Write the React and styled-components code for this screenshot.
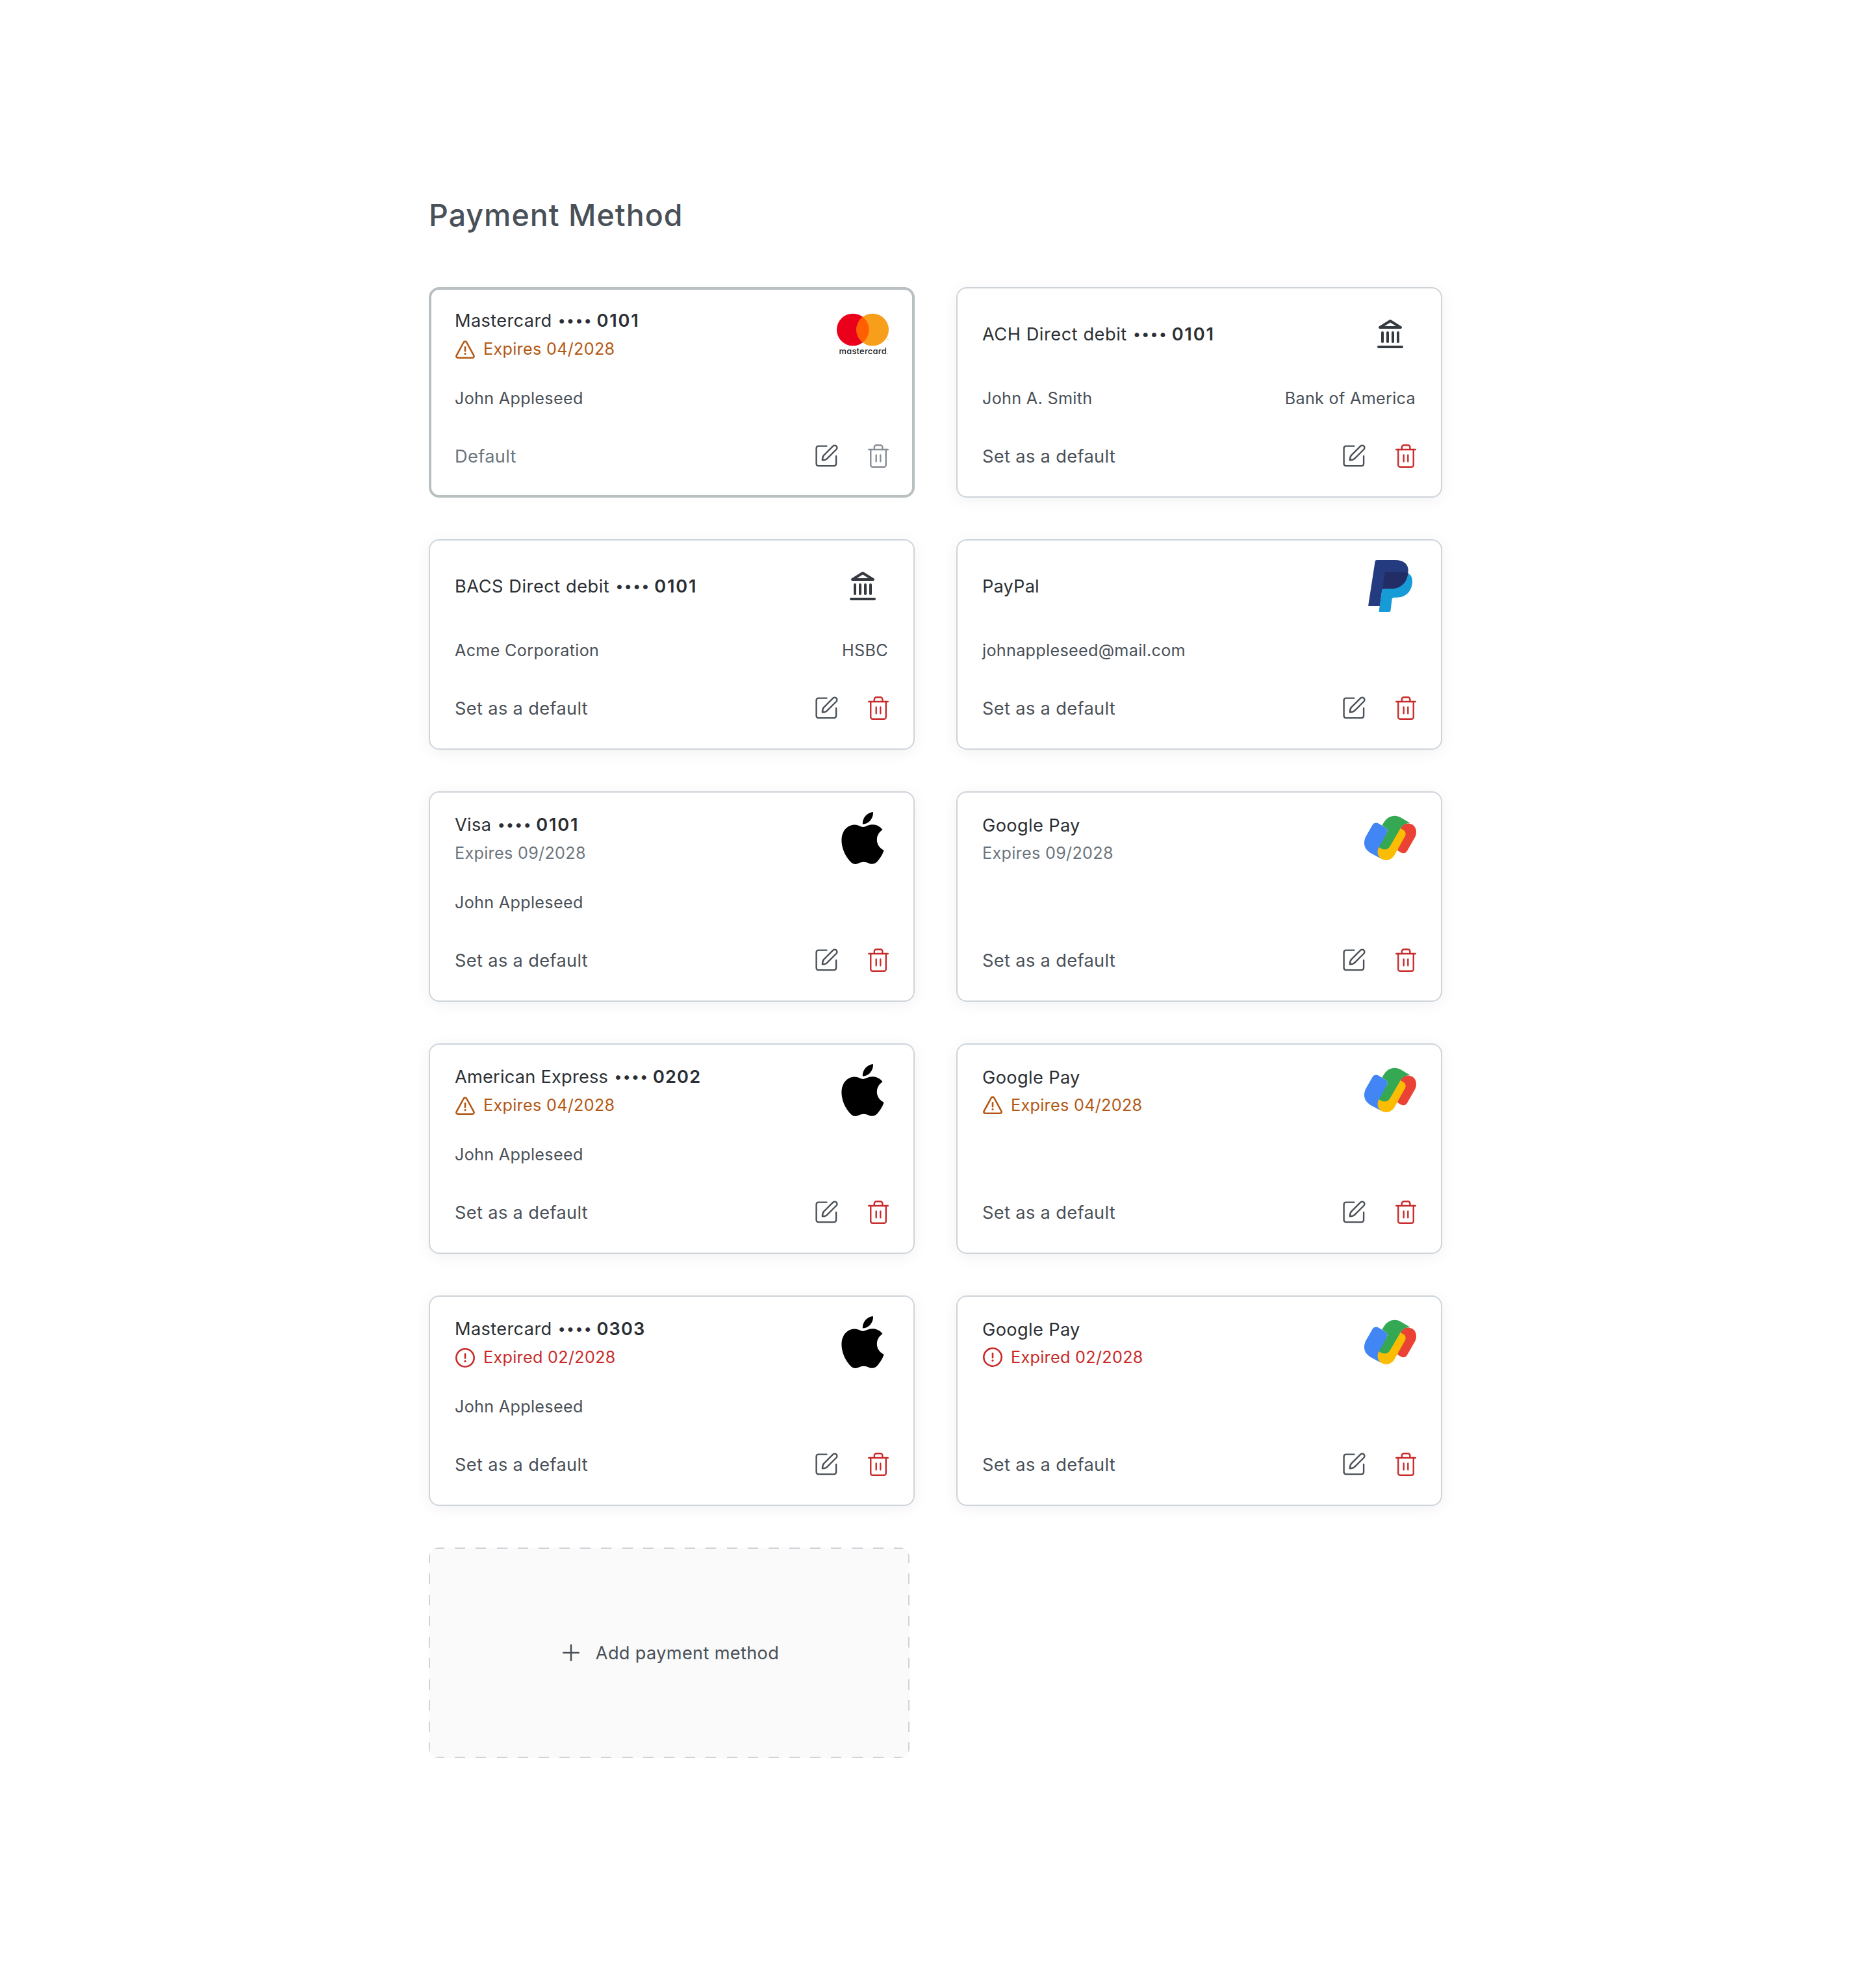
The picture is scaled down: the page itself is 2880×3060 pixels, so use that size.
import React from 'react';
import styled, { createGlobalStyle } from 'styled-components';

const GlobalStyle = createGlobalStyle`
  *, *::before, *::after {
    box-sizing: border-box;
  }
  body {
    margin: 0;
    background: #ffffff;
    font-family: Inter, "Liberation Sans", sans-serif;
    -webkit-font-smoothing: antialiased;
  }
`;

const methods = [
  { id: 1, name: 'Mastercard', digits: '0101', brand: 'mastercard', status: 'warning', expiry: 'Expires 04/2028', holder: 'John Appleseed', isDefault: true },
  { id: 2, name: 'ACH Direct debit', tracking: 0.54, digits: '0101', brand: 'bank', holder: 'John A. Smith', bank: 'Bank of America' },
  { id: 3, name: 'BACS Direct debit', tracking: 0.54, digits: '0101', brand: 'bank', holder: 'Acme Corporation', bank: 'HSBC' },
  { id: 4, name: 'PayPal', tracking: 0.16, brand: 'paypal', holder: 'johnappleseed@mail.com' },
  { id: 5, name: 'Visa', digits: '0101', brand: 'apple', status: 'valid', expiry: 'Expires 09/2028', holder: 'John Appleseed' },
  { id: 6, name: 'Google Pay', brand: 'google', status: 'valid', expiry: 'Expires 09/2028' },
  { id: 7, name: 'American Express', tracking: 0.22, digits: '0202', brand: 'apple', status: 'warning', expiry: 'Expires 04/2028', holder: 'John Appleseed' },
  { id: 8, name: 'Google Pay', brand: 'google', status: 'warning', expiry: 'Expires 04/2028' },
  { id: 9, name: 'Mastercard', digits: '0303', brand: 'apple', status: 'expired', expiry: 'Expired 02/2028', holder: 'John Appleseed' },
  { id: 10, name: 'Google Pay', brand: 'google', status: 'expired', expiry: 'Expired 02/2028' },
];

const statusColors = {
  valid: '#6c757d',
  warning: '#b35814',
  expired: '#c92a2a',
};

function MastercardLogo() {
  return (
    <Logo viewBox="0 0 80 80">
      <circle cx="24.85" cy="33.5" r="24.85" fill="#eb001b" />
      <circle cx="55.15" cy="33.5" r="24.85" fill="#f79e1b" />
      <path d="M40 13.8a24.85 24.85 0 0 1 0 39.4a24.85 24.85 0 0 1 0-39.4z" fill="#ff5f00" />
      <path d="M77.4 48.4h2.4" stroke="#f79e1b" strokeWidth="0.6" />
      <LogoText x="3.6" y="71" textLength="73">mastercard</LogoText>
      <circle cx="78.6" cy="70.4" r="0.6" fill="#888888" />
    </Logo>
  );
}

function BankLogo() {
  return (
    <Logo viewBox="-8 -8 40 40" fill="none" stroke="#343a40" strokeWidth="2" strokeLinecap="round" strokeLinejoin="round">
      <path d="M4 7L12 2L20 7Z" />
      <path d="M6 11V18M10 11V18M14 11V18M18 11V18" />
      <path d="M3 22H21" />
    </Logo>
  );
}

function PaypalLogo() {
  return (
    <Logo viewBox="120 126 240 240">
      <path fill="#253b80" d="M178 126H262C302 126 324 145 323 176C322 225 292 259 245 259H212C206 259 203 262 202 267L192 339H142Q138 339 138.6 335L170 132Q171 126 178 126Z" />
      <path fill="#179bd7" d="M321 187C336 195 343 208 342 225C341 270 312 299 270 299H258C252 299 249 302 248 307L241.5 360Q240.5 366 234 366H191Q187 366 187.8 361L201.5 267C203 261 206 259 212 259Z" />
      <path fill="#222d65" d="M222 180H295C306 180 315 183 322 187C317 230 290 259 245 259H212C208 259 205 261 203.5 263L215 186Q216 180 222 180Z" />
    </Logo>
  );
}

function AppleLogo() {
  return (
    <Logo viewBox="0 0 24 24">
      <path d="M12.152 6.896c-.948 0-2.415-1.078-3.96-1.04-2.04.027-3.91 1.183-4.961 3.014-2.117 3.675-.546 9.103 1.519 12.09 1.013 1.454 2.208 3.09 3.792 3.039 1.52-.065 2.09-.987 3.935-.987 1.831 0 2.35.987 3.96.948 1.637-.026 2.676-1.48 3.676-2.948 1.156-1.688 1.636-3.325 1.662-3.415-.039-.013-3.182-1.221-3.22-4.857-.026-3.04 2.48-4.494 2.597-4.559-1.429-2.09-3.623-2.324-4.39-2.376-2-.156-3.675 1.09-4.61 1.09zM15.53 3.83c.843-1.012 1.4-2.427 1.245-3.83-1.207.052-2.662.805-3.532 1.818-.78.896-1.454 2.338-1.273 3.714 1.338.104 2.715-.688 3.559-1.701" />
    </Logo>
  );
}

function GoogleLogo() {
  return (
    <Logo viewBox="90 90 240 240">
      <path fill="#ea4335" d="M257 165C267 143 291 137 311 147C330 158 335 183 325 205L288 269C282 280 269 283 258 276L243 267L268 190Z" />
      <path fill="#4285f4" d="M128 149C133 140 144 137 153 141L187 161C197 167 199 177 194 188L168 252L165 304L118 278C91 262 82 235 97 203Z" />
      <path fill="#fbbc04" d="M257 165L271 173C281 179 284 190 278 202L230 288C216 312 190 318 168 305C150 293 147 270 158 252L190 245Z" />
      <path fill="#34a853" d="M172 151L181 137C198 108 232 99 258 115L302 141C284 140 267 148 257 165L208 249C198 264 180 267 163 256L158 252L194 188C199 177 197 167 187 161Z" />
    </Logo>
  );
}

const logos = {
  mastercard: MastercardLogo,
  bank: BankLogo,
  paypal: PaypalLogo,
  apple: AppleLogo,
  google: GoogleLogo,
};

function WarningIcon() {
  return (
    <StatusIcon viewBox="0 0 32 32">
      <path d="M13.7 5L2.7 25.2a2.3 2.3 0 0 0 2.1 3.5h22.4a2.3 2.3 0 0 0 2.1-3.5L18.3 5a2.65 2.65 0 0 0-4.6 0z" />
      <path d="M16 12.3V18.3" />
      <circle cx="16" cy="22.6" r="1.6" fill="currentColor" stroke="none" />
    </StatusIcon>
  );
}

function ExpiredIcon() {
  return (
    <StatusIcon viewBox="0 0 32 32">
      <circle cx="16" cy="16" r="13.7" />
      <path d="M16 10.3V16.5" />
      <circle cx="16" cy="21.2" r="1.6" fill="currentColor" stroke="none" />
    </StatusIcon>
  );
}

function EditIcon() {
  return (
    <svg viewBox="0 0 40 40">
      <path d="M20.5 4.6H8A3.5 3.5 0 0 0 4.6 8V31.7A3.5 3.5 0 0 0 8 35.1H31.7A3.5 3.5 0 0 0 35.1 31.7V20" />
      <path d="M30.25 4.65a3.6 3.6 0 0 1 5.1 5.1L20.9 24.2C19.6 25.5 17 26.3 13.9 26.3C13.9 23.5 14.7 20.4 16 18.9Z" />
    </svg>
  );
}

function TrashIcon() {
  return (
    <svg viewBox="0 0 40 40">
      <path d="M5.2 10H34.8" />
      <path d="M13.8 10V6.5A3.3 3.3 0 0 1 17.1 3.2H23.1A3.3 3.3 0 0 1 26.4 6.5V10" />
      <path d="M8.25 10V33.7A3.1 3.1 0 0 0 11.35 36.8H28.65A3.1 3.1 0 0 0 31.75 33.7V10" />
      <path d="M16.7 18.5V28.2M23.3 18.5V28.2" />
    </svg>
  );
}

function PaymentCard({ method }) {
  const BrandLogo = logos[method.brand];
  return (
    <Card $selected={method.isDefault}>
      <CardHeader>
        <div>
          <NameRow>
            <Name $tracking={method.tracking}>{method.name}</Name>
            {method.digits && <Dots>••••</Dots>}
            {method.digits && <Digits $narrow={method.digits.includes('1')}>{method.digits}</Digits>}
          </NameRow>
          {method.expiry && (
            <Expiry $status={method.status}>
              {method.status === 'warning' && <WarningIcon />}
              {method.status === 'expired' && <ExpiredIcon />}
              {method.expiry}
            </Expiry>
          )}
        </div>
        <BrandLogo />
      </CardHeader>
      <Details>
        <span>{method.holder}</span>
        <span>{method.bank}</span>
      </Details>
      <CardFooter>
        <DefaultButton disabled={method.isDefault}>
          {method.isDefault ? 'Default' : 'Set as a default'}
        </DefaultButton>
        <Actions>
          <IconButton aria-label="Edit">
            <EditIcon />
          </IconButton>
          <IconButton aria-label="Delete" $danger disabled={method.isDefault}>
            <TrashIcon />
          </IconButton>
        </Actions>
      </CardFooter>
    </Card>
  );
}

export default function App() {
  return (
    <>
      <GlobalStyle />
      <Page>
        <Title>Payment Method</Title>
        <Grid>
          {methods.map((method) => (
            <PaymentCard key={method.id} method={method} />
          ))}
          <AddCard>
            <svg viewBox="0 0 40 40">
              <path d="M8.3 20H31.7M20 8.3V31.7" />
            </svg>
            Add payment method
          </AddCard>
        </Grid>
      </Page>
    </>
  );
}

const Page = styled.main`
  min-height: 3060px;
  padding: 299px 660px 0;
`;

const Title = styled.h1`
  margin: 0 0 79px;
  font-size: 46.5px;
  font-weight: 500;
  line-height: 64px;
  letter-spacing: 1.02px;
  color: #495057;
`;

const Grid = styled.div`
  display: grid;
  grid-template-columns: 748px 748px;
  grid-auto-rows: 324px;
  gap: 64px;
`;

const Card = styled.section`
  display: flex;
  flex-direction: column;
  padding: 32px 40px 0;
  border-radius: 16px;
  background: #ffffff;
  box-shadow: ${({ $selected }) =>
    $selected
      ? 'inset 0 0 0 4px #b9c0c2'
      : 'inset 0 0 0 2px #ced4da, 0 4px 24px rgba(0, 0, 0, 0.06)'};
`;

const CardHeader = styled.div`
  display: flex;
  align-items: center;
  justify-content: space-between;
  height: 80px;
`;

const NameRow = styled.div`
  display: flex;
  align-items: baseline;
  padding-top: 2px;
  font-size: 27.2px;
  line-height: 44px;
  color: #2b2f33;
`;

const Name = styled.span`
  letter-spacing: ${({ $tracking }) => $tracking ?? 0.36}px;
`;

const Dots = styled.span`
  position: relative;
  top: -1.6px;
  margin-left: 9px;
  font-size: 22px;
  letter-spacing: 0.95px;
`;

const Digits = styled.span`
  margin-left: 6.6px;
  font-weight: 600;
  letter-spacing: ${({ $narrow }) => ($narrow ? '1.8px' : '1.1px')};
`;

const Expiry = styled.div`
  display: flex;
  align-items: center;
  gap: 12px;
  font-size: 25.2px;
  line-height: 41px;
  letter-spacing: 0.3px;
  color: ${({ $status }) => statusColors[$status]};
`;

const StatusIcon = styled.svg`
  width: 32px;
  height: 32px;
  fill: none;
  stroke: currentColor;
  stroke-width: 2.6;
  stroke-linecap: round;
  stroke-linejoin: round;
`;

const Logo = styled.svg`
  flex: none;
  width: 80px;
  height: 80px;
`;

const LogoText = styled.text`
  font-size: 12.8px;
  font-weight: 500;
  font-feature-settings: "cv11";
  fill: #1a1a1a;
`;

const Details = styled.div`
  display: flex;
  justify-content: space-between;
  height: 40px;
  margin-top: 39px;
  padding-right: 1px;
  font-size: 25.2px;
  line-height: 40px;
  letter-spacing: 0.3px;
  color: #495057;
`;

const CardFooter = styled.div`
  display: flex;
  align-items: center;
  justify-content: space-between;
  height: 40px;
  margin-top: 49px;
`;

const DefaultButton = styled.button`
  padding: 2px 0 0;
  border: 0;
  background: none;
  font-family: inherit;
  font-size: 27.2px;
  line-height: 40px;
  letter-spacing: 0.36px;
  color: ${({ disabled }) => (disabled ? '#6c757d' : '#495057')};
`;

const Actions = styled.div`
  display: flex;
  gap: 40px;
  margin-right: -4px;
`;

const IconButton = styled.button`
  display: flex;
  padding: 0;
  border: 0;
  background: none;
  color: ${({ $danger, disabled }) => (disabled ? '#868e96' : $danger ? '#c92a2a' : '#495057')};

  svg {
    width: 40px;
    height: 40px;
    fill: none;
    stroke: currentColor;
    stroke-width: 2.4;
    stroke-linecap: round;
    stroke-linejoin: round;
  }
`;

/* 16px dashes, spaced so that every side starts and ends with a whole one */
const AddCard = styled.button`
  display: flex;
  align-items: center;
  justify-content: center;
  gap: 18px;
  width: 740px;
  padding: 0;
  border: 0;
  border-radius: 16px;
  font-family: inherit;
  font-size: 27.2px;
  letter-spacing: 0.32px;
  color: #495057;
  background:
    repeating-linear-gradient(to right, #ced4da 0 16px, transparent 16px 32.18px) 8px 0 / 724px 2px no-repeat,
    repeating-linear-gradient(to right, #ced4da 0 16px, transparent 16px 32.18px) 8px 100% / 724px 2px no-repeat,
    repeating-linear-gradient(to bottom, #ced4da 0 16px, transparent 16px 32.44px) 0 8px / 2px 308px no-repeat,
    repeating-linear-gradient(to bottom, #ced4da 0 16px, transparent 16px 32.44px) 100% 8px / 2px 308px no-repeat,
    #fafafa;

  svg {
    width: 40px;
    height: 40px;
    margin-left: -2px;
    stroke: currentColor;
    stroke-width: 2.6;
    stroke-linecap: round;
  }
`;
